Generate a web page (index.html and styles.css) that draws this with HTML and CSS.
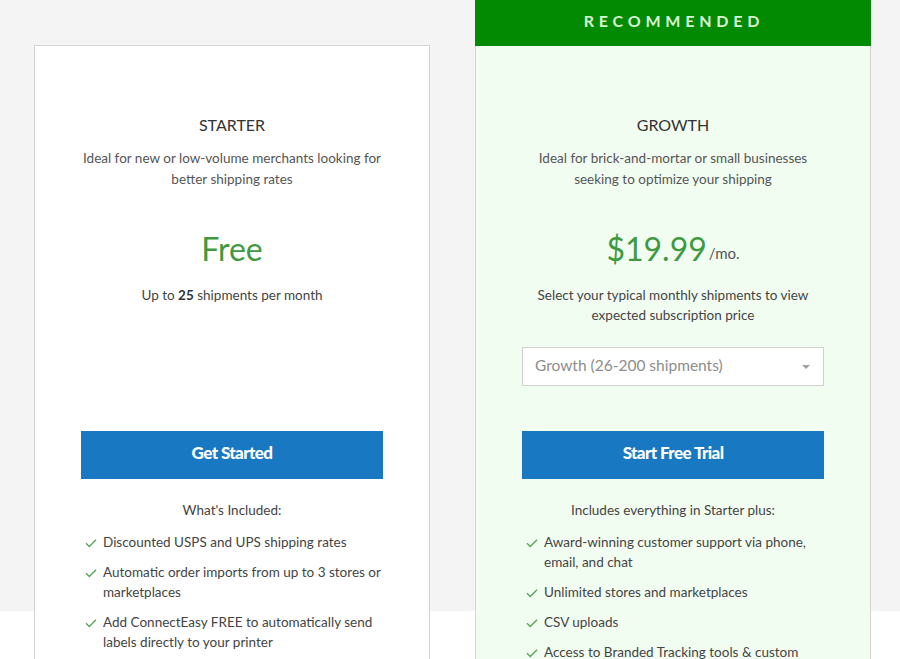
FILE: index.html
```html
<!DOCTYPE html>
<html lang="en">
<head>
  <meta charset="UTF-8">
  <meta name="viewport" content="width=device-width, initial-scale=1.0">
  <title>Plans</title>
  <link rel="stylesheet" href="styles.css">
</head>
<body>
  <div class="plans">
    <div class="plan">
      <div class="plan-head">
        <h3>STARTER</h3>
        <p class="desc">Ideal for new or low-volume merchants looking for better shipping rates</p>
        <div class="price">Free</div>
        <p class="note">Up to <b>25</b> shipments per month</p>
      </div>
      <button class="cta">Get Started</button>
      <p class="included">What's Included:</p>
      <ul class="features">
        <li><svg viewBox="0 0 12 10"><path d="M1 5.2 L4.3 8.5 L11 1.8"/></svg><span>Discounted USPS and UPS shipping rates</span></li>
        <li><svg viewBox="0 0 12 10"><path d="M1 5.2 L4.3 8.5 L11 1.8"/></svg><span>Automatic order imports from up to 3 stores or marketplaces</span></li>
        <li><svg viewBox="0 0 12 10"><path d="M1 5.2 L4.3 8.5 L11 1.8"/></svg><span>Add ConnectEasy FREE to automatically send labels directly to your printer</span></li>
        <li><svg viewBox="0 0 12 10"><path d="M1 5.2 L4.3 8.5 L11 1.8"/></svg><span>Shipping insurance for your packages</span></li>
      </ul>
    </div>

    <div class="plan featured">
      <div class="ribbon">RECOMMENDED</div>
      <div class="plan-head">
        <h3>GROWTH</h3>
        <p class="desc">Ideal for brick-and-mortar or small businesses seeking to optimize your shipping</p>
        <div class="price">$19.99<span class="per">/mo.</span></div>
        <p class="note">Select your typical monthly shipments to view expected subscription price</p>
        <div class="select">
          <span>Growth (26-200 shipments)</span>
          <span class="caret"></span>
        </div>
      </div>
      <button class="cta">Start Free Trial</button>
      <p class="included">Includes everything in Starter plus:</p>
      <ul class="features">
        <li><svg viewBox="0 0 12 10"><path d="M1 5.2 L4.3 8.5 L11 1.8"/></svg><span>Award-winning customer support via phone, email, and chat</span></li>
        <li><svg viewBox="0 0 12 10"><path d="M1 5.2 L4.3 8.5 L11 1.8"/></svg><span>Unlimited stores and marketplaces</span></li>
        <li><svg viewBox="0 0 12 10"><path d="M1 5.2 L4.3 8.5 L11 1.8"/></svg><span>CSV uploads</span></li>
        <li><svg viewBox="0 0 12 10"><path d="M1 5.2 L4.3 8.5 L11 1.8"/></svg><span>Access to Branded Tracking tools &amp; custom packing slips</span></li>
      </ul>
    </div>
  </div>
</body>
</html>
```

FILE: styles.css
```css
* {
  margin: 0;
  padding: 0;
  box-sizing: border-box;
}
body {
  font-family: 'Lato', 'Liberation Sans', sans-serif;
  background: linear-gradient(#f4f4f4 611px, #ffffff 611px);
  min-height: 100vh;
  color: #444;
}
.plans {
  display: flex;
  align-items: flex-start;
  gap: 45px;
  padding-left: 34px;
}
.plan {
  width: 396px;
  margin-top: 45px;
  background: #ffffff;
  border: 1px solid #d4d4d4;
  padding: 0 46px 40px;
  text-align: center;
}
.plan.featured {
  margin-top: 0;
  border-top: none;
  background: #f2fdf2;
}
.ribbon {
  margin: 0 -47px;
  height: 46px;
  background: #038a03;
  color: #d8f5d3;
  font-size: 16px;
  font-weight: 700;
  letter-spacing: 4.8px;
  line-height: 42px;
  padding-left: 2px;
}
.plan-head {
  height: 385px;
  padding-top: 69px;
}
h3 {
  font-size: 16px;
  font-weight: 400;
  color: #333;
  line-height: 20px;
}
.desc {
  margin-top: 13px;
  font-size: 13.5px;
  line-height: 21px;
  color: #555;
}
.price {
  margin-top: 39px;
  height: 40px;
  font-size: 32px;
  line-height: 40px;
  color: #3f9a3f;
}
.per {
  font-size: 15px;
  line-height: 1;
  color: #555;
  margin-left: 2px;
  vertical-align: 2px;
}
.note {
  margin-top: 16px;
  font-size: 13.5px;
  line-height: 20px;
  color: #444;
}
.note b {
  color: #333;
}
.select {
  margin-top: 22px;
  height: 39px;
  background: #ffffff;
  border: 1px solid #d0d0d0;
  display: flex;
  align-items: center;
  justify-content: space-between;
  padding: 0 13px 3px 12px;
  font-size: 15.5px;
  color: #8d8d8d;
  text-align: left;
}
.caret {
  width: 0;
  height: 0;
  margin-top: 3px;
  border-left: 4px solid transparent;
  border-right: 4px solid transparent;
  border-top: 4px solid #a0a0a0;
}
.cta {
  display: block;
  width: 100%;
  height: 48px;
  border: none;
  background: #1878c2;
  color: #ffffff;
  font-family: inherit;
  font-size: 17px;
  font-weight: 900;
  letter-spacing: -0.6px;
  padding-bottom: 5px;
  cursor: pointer;
}
.included {
  margin-top: 21px;
  font-size: 13.5px;
  line-height: 20px;
  color: #444;
}
.features {
  list-style: none;
  margin-top: 12px;
  text-align: left;
}
.features li {
  display: flex;
  align-items: flex-start;
  gap: 6px;
  font-size: 13.5px;
  line-height: 20px;
  color: #444;
  margin-bottom: 10px;
}
.features svg {
  flex: none;
  width: 12px;
  height: 10px;
  margin: 6px 0 0 4px;
  fill: none;
  stroke: #5aa55a;
  stroke-width: 1.4;
}
```
